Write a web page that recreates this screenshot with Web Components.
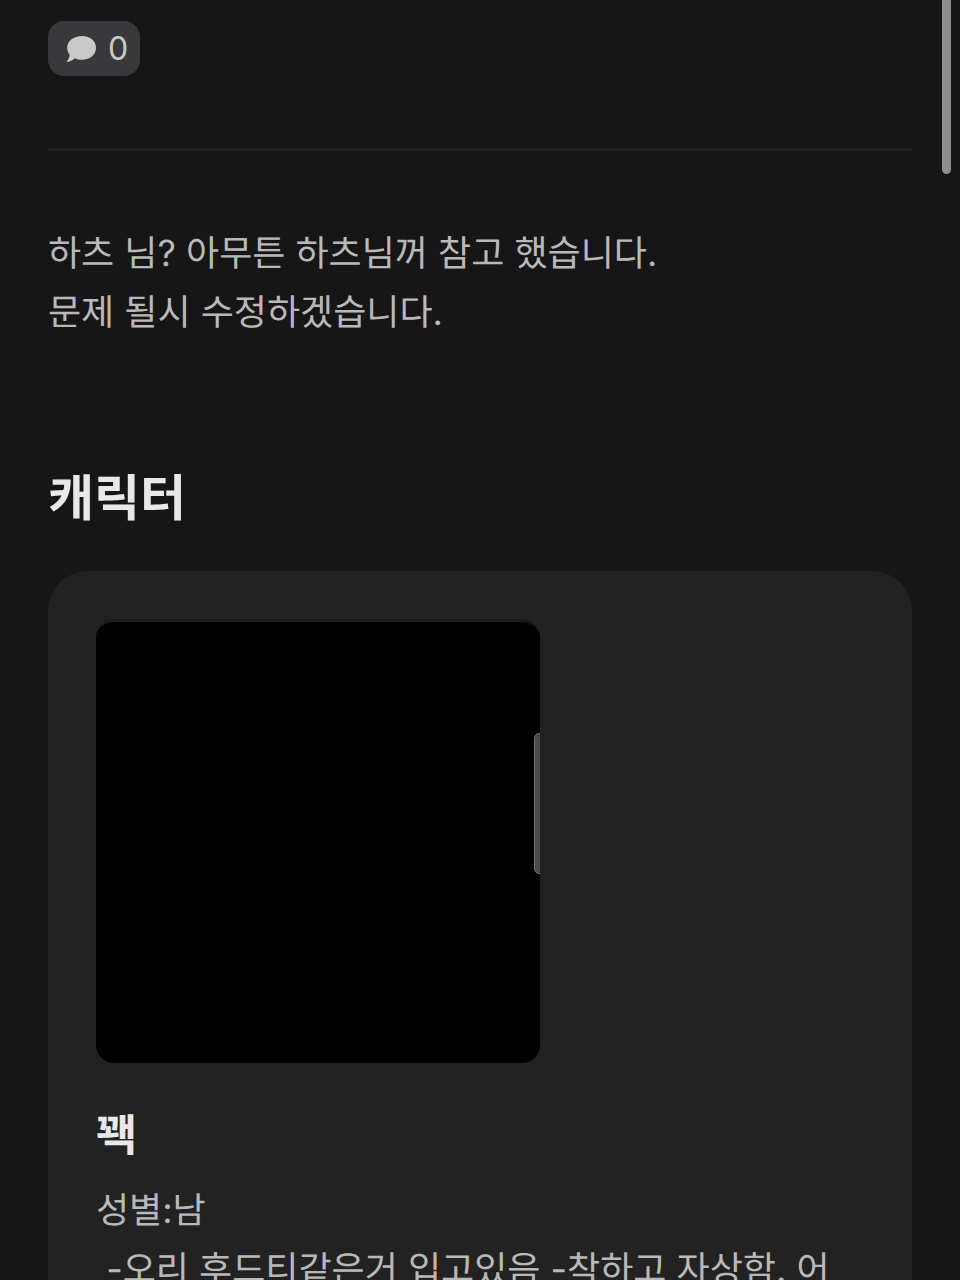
<!DOCTYPE html>
<html lang="ko">
<head>
<meta charset="UTF-8">
<meta name="viewport" content="width=device-width, initial-scale=1">
<title>캐릭터</title>
<style>
  html, body {
    height: 100%;
  }

  body {
    margin: 0;
    overflow: hidden;
    background: #161616;
    color: #b9b9b9;
    font-family: Inter, "Noto Sans CJK KR", sans-serif;
    font-size: 36px;
    line-height: 59px;
    text-rendering: geometricPrecision;
  }
</style>
</head>
<body>
  <story-page>
    <comment-button slot="actions" count="0"></comment-button>
    <story-note slot="note">하츠 님? 아무튼 하츠님꺼 참고 했습니다.<br>문제 될시 수정하겠습니다.</story-note>
    <character-section heading="캐릭터">
      <character-card name="꽥">성별:남
 -오리 후드티같은거 입고있음 -착하고 자상함. 어</character-card>
    </character-section>
  </story-page>

<script>
// Page shell with the scroll indicator on the right edge
class StoryPage extends HTMLElement {
  constructor() {
    super();
    this.attachShadow({ mode: 'open' });
  }

  connectedCallback() {
    this.shadowRoot.innerHTML = `
      <style>
        :host {
          display: block;
          position: relative;
          height: 100%;
          overflow: hidden;
        }

        main {
          padding: 21px 48px 0;
        }

        hr {
          height: 3px;
          margin: 72px 0 73px;
          border: none;
          background: #212121;
        }

        .thumb {
          position: absolute;
          top: -8px;
          right: 9px;
          width: 9px;
          height: 182px;
          border-radius: 5px;
          background: #8e8e8e;
        }
      </style>

      <main>
        <slot name="actions"></slot>
        <hr>
        <slot name="note"></slot>
        <slot></slot>
      </main>
      <div class="thumb"></div>
    `;
  }
}

// Comment counter pill
class CommentButtonElement extends HTMLElement {
  constructor() {
    super();
    this.attachShadow({ mode: 'open' });
  }

  connectedCallback() {
    const count = this.getAttribute('count') || '0';

    this.shadowRoot.innerHTML = `
      <style>
        :host {
          display: flex;
        }

        button {
          display: flex;
          align-items: center;
          gap: 11px;
          height: 55px;
          padding: 0 12px 0 18px;
          border: none;
          border-radius: 16px;
          background: #39393b;
          color: #c9c9c9;
          font-family: Inter, sans-serif;
          font-size: 32px;
          font-weight: 400;
          line-height: 40px;
          cursor: pointer;
        }

        svg {
          display: block;
          width: 31px;
          height: 28px;
        }
      </style>

      <button type="button" aria-label="댓글 ${count}">
        <svg viewBox="0 0 31 28" fill="currentColor" aria-hidden="true">
          <path d="M16 1C24.200 1 30 6 30 12.800S24.200 24.800 16 24.800C13.200 24.800 10.800 24.300 8.700 23.300C6.700 25.300 4 26.800 1.300 27.100C0.700 27.100 0.600 26.600 1 26.200C2.800 24.300 3.700 22 3.500 19.600C2 17.700 1.200 15.400 1.200 12.800C1.200 6 7.800 1 16 1Z"/>
        </svg>
        <span>${count}</span>
      </button>
    `;
  }
}

class StoryNote extends HTMLElement {
  constructor() {
    super();
    this.attachShadow({ mode: 'open' });
  }

  connectedCallback() {
    this.shadowRoot.innerHTML = `
      <style>
        :host {
          display: block;
        }

        p {
          margin: 0;
        }
      </style>

      <p><slot></slot></p>
    `;
  }
}

class CharacterSection extends HTMLElement {
  constructor() {
    super();
    this.attachShadow({ mode: 'open' });
  }

  connectedCallback() {
    this.shadowRoot.innerHTML = `
      <style>
        :host {
          display: block;
          margin-top: 127px;
        }

        h2 {
          margin: 0 0 42px;
          color: #e8e8ea;
          font-size: 50px;
          font-weight: 600;
          line-height: 60px;
        }
      </style>

      <section>
        <h2>${this.getAttribute('heading')}</h2>
        <slot></slot>
      </section>
    `;
  }
}

// Portrait, name and description
class CharacterCard extends HTMLElement {
  constructor() {
    super();
    this.attachShadow({ mode: 'open' });
  }

  connectedCallback() {
    this.shadowRoot.innerHTML = `
      <style>
        :host {
          display: block;
          padding: 48px;
          border-radius: 40px;
          background: #222222;
        }

        .portrait {
          position: relative;
          box-sizing: border-box;
          width: 444px;
          max-width: 100%;
          aspect-ratio: 1;
          overflow: hidden;
          border-top: 3px solid #1a1a1a;
          border-radius: 18px;
          background: #000;
        }

        .portrait::after {
          content: "";
          position: absolute;
          top: 111px;
          right: -4px;
          box-sizing: border-box;
          width: 10px;
          height: 141px;
          border: 1px solid #707070;
          border-radius: 5px;
          background: #4c4c4c;
        }

        h3 {
          margin: 42px 0 16px;
          color: #e8e8ea;
          font-size: 44px;
          font-weight: 600;
          line-height: 60px;
        }

        p {
          margin: 0;
          white-space: pre-wrap;
        }
      </style>

      <article>
        <div class="portrait" role="img" aria-label="${this.getAttribute('name')}"></div>
        <h3>${this.getAttribute('name')}</h3>
        <p><slot></slot></p>
      </article>
    `;
  }
}

customElements.define('story-page', StoryPage);
customElements.define('comment-button', CommentButtonElement);
customElements.define('story-note', StoryNote);
customElements.define('character-section', CharacterSection);
customElements.define('character-card', CharacterCard);
</script>
</body>
</html>
